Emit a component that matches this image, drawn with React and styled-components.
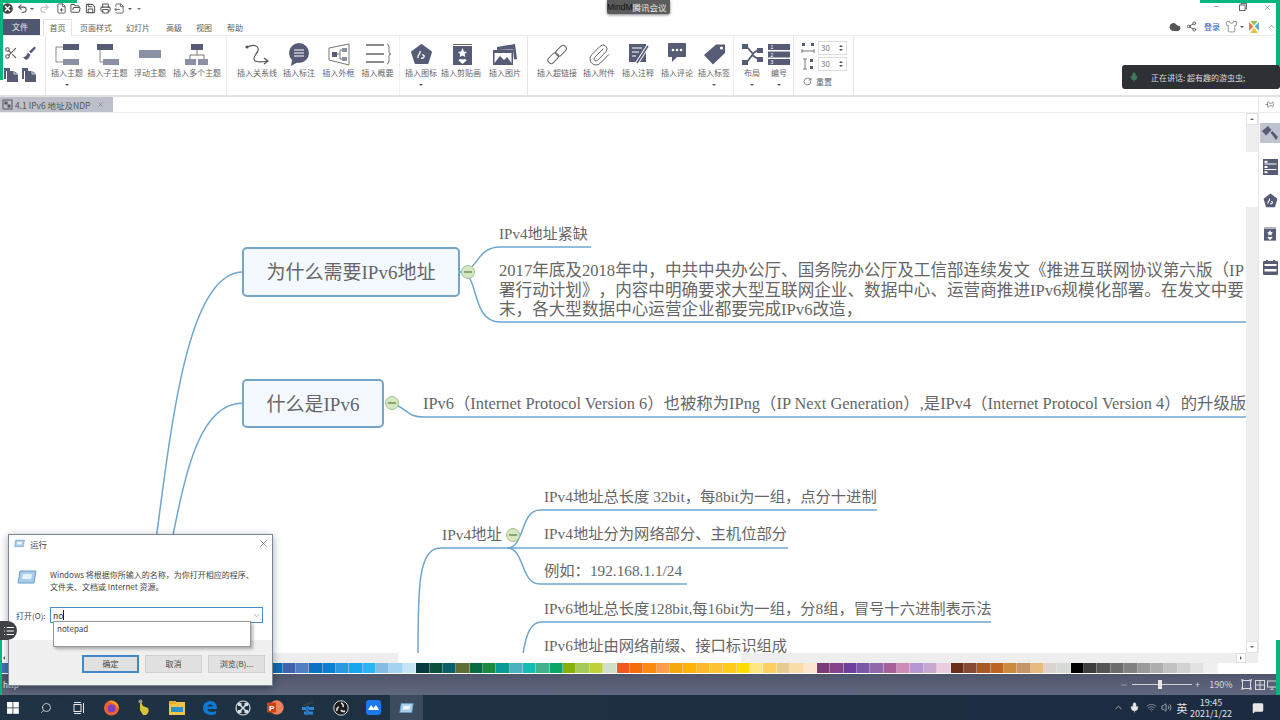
import React from "react";
import styled, { createGlobalStyle } from "styled-components";
import {
  Undo2, Redo2, FilePlus, FolderOpen, Save, Printer, FileOutput, Scissors,
  Paperclip, Mic, Search, ChevronDown, ChevronUp, X, Minus, Share2, Shirt, Cloud, RotateCw, Pin, Volume2, Wifi,
  MessageSquare, List,
} from "lucide-react";

const D = "#565c76";
const L = "#8b90a4";
const LINE = "#6fa6cf";

const GlobalStyle = createGlobalStyle`
  html, body { margin: 0; padding: 0; background: #fff; }
  * { box-sizing: border-box; }
  body { font-family: "Noto Sans CJK SC", "Liberation Sans", sans-serif; color: #5c5c5c; text-spacing-trim: space-all; }
`;

const Screen = styled.div`
  position: relative;
  width: 1280px;
  height: 720px;
  overflow: hidden;
  display: flex;
  flex-direction: column;
  background: #fff;
`;

const TitleBar = styled.div`
  height: 18px;
  display: flex;
  align-items: center;
  padding-bottom: 1px;
`;
const QatSlot = styled.div`
  flex: 0 0 ${p => p.$w}px;
  display: flex;
  justify-content: center;
  align-items: center;
  color: ${p => p.$color || "#555"};
`;
const Caret = styled.span`
  width: 0;
  height: 0;
  border-left: 2px solid transparent;
  border-right: 2px solid transparent;
  border-top: 2.5px solid ${p => p.$color || "#555"};
`;
const WindowControls = styled.div`
  margin-left: auto;
  margin-top: -3px;
  display: flex;
  color: #666;
  padding-right: 1px;
`;
const WinButton = styled.div`
  width: 24px;
  margin-left: ${p => p.$ml || 0}px;
  display: flex;
  justify-content: center;
`;

const MenuBar = styled.div`
  height: 17px;
  display: flex;
  align-items: flex-end;
  font-size: 8px;
  line-height: 15px;
`;
const FileTab = styled.div`
  width: 40px;
  height: 16px;
  background: #4e5672;
  color: #f0f0f0;
  text-align: center;
`;
const HomeTab = styled.div`
  width: 29px;
  height: 17px;
  margin-left: 3px;
  margin-bottom: -1px;
  background: #fff;
  border: 1px solid #e3e3e3;
  border-bottom: none;
  text-align: center;
  position: relative;
  z-index: 1;
`;
const MenuItem = styled.div`
  flex: 0 0 ${p => p.$w}px;
  text-align: center;
`;
const MenuRight = styled.div`
  margin-left: auto;
  height: 17px;
  display: flex;
  align-items: center;
  color: #555;
`;
const MenuRightSlot = styled.div`
  flex: 0 0 ${p => p.$w}px;
  display: flex;
  justify-content: center;
  align-items: center;
  color: ${p => p.$color || "#555"};
  font-size: 8px;
`;

const Ribbon = styled.div`
  height: 62px;
  display: flex;
  border-top: 1px solid #ececec;
  border-bottom: 2px solid #e2e2e2;
`;
const RibbonGroup = styled.div`
  flex: 0 0 ${p => p.$w}px;
  display: flex;
  padding-left: ${p => p.$pad || 0}px;
  position: relative;
  border-right: 1px solid ${p => (p.$strong ? "#e6e6e6" : "#f0f0f0")};
`;
const ClipGrid = styled.div`
  display: grid;
  grid-template-columns: 18px 18px;
  grid-auto-rows: 22px;
  padding: 6px 0 0 2px;
  align-items: center;
  justify-items: center;
  color: ${D};
`;
const RibbonButton = styled.div`
  flex: 0 0 ${p => p.$w}px;
  min-width: 0;
  display: flex;
  flex-direction: column;
  align-items: center;
  padding-top: 5px;
`;
const IconBox = styled.div`
  height: 27px;
  display: flex;
  align-items: center;
  justify-content: center;
`;
const RibbonLabel = styled.div`
  font-size: 8px;
  line-height: 10px;
  white-space: nowrap;
  color: #666;
`;
const ArrowRow = styled.div`
  margin-top: 6px;
  height: 4px;
  display: flex;
  justify-content: center;
`;
const SpacingCol = styled.div`
  display: flex;
  flex-direction: column;
  padding: 5px 0 0 7px;
  gap: 2px;
`;
const SpacingRow = styled.div`
  display: flex;
  align-items: center;
  height: 14px;
  gap: 3px;
`;
const NumBox = styled.div`
  width: 29px;
  height: 14px;
  border: 1px solid #ddd;
  font-size: 8px;
  line-height: 12px;
  padding-left: 2px;
  color: #777;
  display: flex;
  justify-content: space-between;
  align-items: center;
`;
const Spin = styled.div`
  display: flex;
  flex-direction: column;
  gap: 2px;
  padding-right: 3px;
`;
const CaretUp = styled(Caret)`
  transform: rotate(180deg);
`;
const CaretRight = styled(Caret)`
  transform: rotate(-90deg);
`;
const CaretLeft = styled(Caret)`
  transform: rotate(90deg);
`;
const ResetRow = styled.div`
  display: flex;
  align-items: center;
  gap: 4px;
  font-size: 8px;
  color: #666;
  margin-top: 3px;
  padding-left: 2px;
`;

const TabRow = styled.div`
  height: 16px;
  display: flex;
  border-bottom: 1px solid #ececec;
  align-items: stretch;
`;
const DocTab = styled.div`
  width: 113px;
  background: #bcc0ca;
  display: flex;
  align-items: center;
  font-size: 8.5px;
  padding-left: 2px;
  gap: 2px;
  color: #555;
  white-space: nowrap;
`;
const TabClose = styled.span`
  display: flex;
  margin-left: 4px;
`;
const PinSlot = styled.div`
  margin-left: auto;
  width: 22px;
  border-left: 1px solid #e8e8e8;
  display: flex;
  align-items: center;
  justify-content: center;
  color: #555;
  & svg {
    transform: rotate(90deg);
  }
`;

const Workspace = styled.div`
  flex: 1;
  min-height: 0;
  display: flex;
`;
const Canvas = styled.div`
  position: relative;
  flex: 1;
  overflow: hidden;
  background: #fff;
  font-family: "Liberation Serif", "Noto Sans CJK SC", serif;
  color: #666;
`;
const Lines = styled.svg`
  position: absolute;
  left: 0;
  top: 0;
`;
const TopicBox = styled.div`
  position: absolute;
  left: ${p => p.$x}px;
  top: ${p => p.$y - 113}px;
  width: ${p => p.$w}px;
  height: ${p => p.$h}px;
  padding-bottom: 3px;
  border: 2px solid #74a6cc;
  border-radius: 5px;
  background: #f3f9fe;
  display: flex;
  justify-content: center;
  align-items: center;
  font-size: 19px;
  white-space: nowrap;
`;
const Leaf = styled.div`
  position: absolute;
  left: ${p => p.$x}px;
  top: ${p => p.$y - 113}px;
  font-size: ${p => p.$size || 15.3}px;
  line-height: ${p => p.$lh || 20}px;
  white-space: pre;
`;
const Toggle = styled.div`
  position: absolute;
  left: ${p => p.$x - 7}px;
  top: ${p => p.$y - 113 - 7}px;
  width: 14px;
  height: 14px;
  border-radius: 50%;
  background: #d6e6c2;
  border: 1px solid #a3c48a;
  display: flex;
  align-items: center;
  justify-content: center;
  &::after {
    content: "";
    width: 8px;
    height: 1.5px;
    background: #87a873;
  }
`;

const VScroll = styled.div`
  flex: 0 0 12px;
  background: #eee;
  display: flex;
  flex-direction: column;
`;
const ScrollButton = styled.div`
  height: 12px;
  background: #fff;
  border: 1px solid #e2e2e2;
  display: flex;
  align-items: center;
  justify-content: center;
  margin-top: ${p => (p.$end ? "auto" : 0)};
`;
const VThumb = styled.div`
  height: 55px;
  margin-top: 27px;
  background: #fff;
`;
const SidePanel = styled.div`
  flex: 0 0 22px;
  border-left: 1px solid #e6e6e6;
  padding-top: 10px;
  display: flex;
  flex-direction: column;
  gap: 13.5px;
`;
const SideSlot = styled.div`
  height: 20px;
  display: flex;
  align-items: center;
  justify-content: center;
  margin-left: 1px;
  background: ${p => (p.$active ? "#bfc3cf" : "transparent")};
`;

const HScroll = styled.div`
  height: 10px;
  margin-right: 22px;
  background: #eee;
  display: flex;
`;
const HLeft = styled.div`
  width: 8px;
  background: #fff;
  display: flex;
  align-items: center;
  justify-content: center;
`;
const HThumb = styled.div`
  width: 343px;
  margin-left: 390px;
  background: #fff;
`;
const HRight = styled.div`
  width: 10px;
  margin-left: auto;
  margin-right: 12px;
  background: #fff;
  border: 1px solid #ddd;
  display: flex;
  align-items: center;
  justify-content: center;
`;
const PaletteRow = styled.div`
  height: 11px;
  display: flex;
  padding-left: 2px;
  border-bottom: 1px solid #fff;
`;
const Swatch = styled.div`
  flex: 0 0 13.36px;
  background: ${p => p.$c};
  border-right: 1px solid rgba(255, 255, 255, 0.35);
`;

const StatusBar = styled.div`
  height: 21px;
  background: linear-gradient(#4f566c, #60677f);
  display: flex;
  align-items: center;
  justify-content: flex-end;
  padding-right: 1px;
  color: #d6d8de;
  font-size: 9px;
`;
const StatusLeft = styled.div`
  margin-right: auto;
  padding-left: 3px;
  font-size: 8px;
  color: #eee;
`;
const StatusSlot = styled.div`
  flex: 0 0 ${p => p.$w}px;
  display: flex;
  align-items: center;
  justify-content: center;
`;
const ZoomTrack = styled.div`
  position: relative;
  width: 60px;
  height: 1px;
  background: #cfd2da;
`;
const ZoomThumb = styled.div`
  position: absolute;
  left: 26px;
  top: -4px;
  width: 4px;
  height: 9px;
  background: #e8e8e8;
`;

const Taskbar = styled.div`
  height: 25px;
  display: flex;
  align-items: stretch;
  background: linear-gradient(90deg, #1f3344, #1e3143 30%, #1c2b40);
  color: #e8e8e8;
`;
const TaskApps = styled.div`
  display: flex;
  margin-left: -3.4px;
`;
const TaskSlot = styled.div`
  flex: 0 0 32.8px;
  display: flex;
  align-items: center;
  justify-content: center;
  background: ${p => (p.$active ? "#3c4b5e" : "transparent")};
  & .mirror {
    transform: scaleX(-1);
  }
`;
const Tray = styled.div`
  margin-left: auto;
  display: flex;
  align-items: center;
  padding-right: 10px;
`;
const TraySlot = styled.div`
  flex: 0 0 ${p => p.$w}px;
  margin-left: ${p => p.$ml || 0}px;
  display: flex;
  align-items: center;
  justify-content: center;
  font-size: 11px;
`;
const Clock = styled.div`
  font-size: 9px;
  line-height: 11px;
  text-align: center;
  color: #dfe2e8;
  white-space: nowrap;
`;

const Dialog = styled.div`
  position: absolute;
  left: 8px;
  top: 534px;
  width: 265px;
  height: 152px;
  background: #fff;
  border: 1px solid #7b8596;
  box-shadow: 0 2px 8px rgba(0, 0, 0, 0.35);
  display: flex;
  flex-direction: column;
  font-size: 8px;
  color: #444;
`;
const DialogTitle = styled.div`
  height: 17px;
  display: flex;
  align-items: center;
  padding: 0 3px 0 5px;
  gap: 5px;
  font-size: 8.5px;
`;
const DialogClose = styled.div`
  margin-left: auto;
  color: #444;
  display: flex;
`;
const DialogBody = styled.div`
  display: flex;
  padding: 17px 0 0 8px;
  gap: 13px;
  line-height: 12px;
`;
const DialogText = styled.div`
  white-space: pre;
`;
const InputRow = styled.div`
  display: flex;
  align-items: center;
  margin-top: 14px;
  padding-left: 7px;
`;
const InputLabel = styled.div`
  width: 34px;
`;
const RunInput = styled.div`
  width: 213px;
  height: 16px;
  border: 1px solid #4a8cc8;
  display: flex;
  align-items: center;
  padding-left: 2px;
  font-size: 8.5px;
  color: #333;
`;
const Cursor = styled.span`
  width: 1px;
  height: 10px;
  background: #222;
`;
const InputChevron = styled.div`
  margin-left: auto;
  padding-right: 1px;
  display: flex;
  color: #777;
`;
const Suggestions = styled.div`
  position: absolute;
  left: 44px;
  top: 86px;
  width: 198px;
  height: 26px;
  background: #fff;
  border: 1px solid #999;
  box-shadow: 2px 2px 3px rgba(0, 0, 0, 0.3);
  padding: 1px 0 0 3px;
  font-size: 8px;
  line-height: 12px;
  z-index: 2;
`;
const DialogFooter = styled.div`
  margin-top: auto;
  height: 45px;
  background: #f0f0f0;
  display: flex;
  justify-content: flex-end;
  gap: 6px;
  padding: 15px 7px 0 0;
`;
const DlgButton = styled.div`
  width: 57px;
  height: 18px;
  background: #e1e1e1;
  border: 1px solid ${p => (p.$primary ? "#3f8ac6" : "#d0d0d0")};
  box-shadow: ${p => (p.$primary ? "inset 0 0 0 1px #3f8ac6" : "none")};
  text-align: center;
  line-height: 16px;
`;

const GreenBar = styled.div`
  position: absolute;
  left: ${p => p.$x}px;
  top: ${p => p.$y}px;
  width: ${p => p.$w}px;
  height: ${p => p.$h}px;
  background: #07b67e;
  z-index: 5;
`;
const MeetingBadge = styled.div`
  position: absolute;
  left: 607px;
  top: 0;
  width: 63px;
  height: 14px;
  background: #5b5b5b;
  box-shadow: 0 1px 3px rgba(0, 0, 0, 0.5);
  border-radius: 0 0 2px 2px;
  font-size: 8.5px;
  line-height: 14px;
  color: #eee;
  white-space: nowrap;
  display: flex;
`;
const BadgeApp = styled.span`
  color: #111;
  font-family: "Liberation Sans", sans-serif;
`;
const SpeakToast = styled.div`
  position: absolute;
  left: 1122px;
  top: 65px;
  width: 158px;
  height: 24px;
  background: #2d3034;
  border-radius: 3px;
  color: #dcdcdc;
  font-size: 8px;
  display: flex;
  align-items: center;
  padding-left: 7px;
  gap: 12px;
  z-index: 6;
`;
const MeetingMenu = styled.div`
  position: absolute;
  left: 0;
  top: 621px;
  width: 17px;
  height: 19px;
  background: #3f4145;
  border-radius: 0 10px 10px 0;
  color: #fff;
  display: flex;
  align-items: center;
  justify-content: center;
  z-index: 6;
`;

const Ico = ({ children }) => (
  <svg width="34" height="27" viewBox="0 0 34 27">{children}</svg>
);

const icons = {
  topic: <Ico><rect x="13" y="3" width="16" height="6" fill={D}/><rect x="13" y="18" width="16" height="6" fill={L}/><path d="M13 6H6V21H13" fill="none" stroke="#8a8a8a"/></Ico>,
  sub: <Ico><rect x="6" y="3" width="16" height="6" fill={D}/><rect x="12" y="18" width="16" height="6" fill={L}/><path d="M9 9V21H12" fill="none" stroke="#8a8a8a"/></Ico>,
  float: <Ico><rect x="6" y="9" width="22" height="8" fill={L}/></Ico>,
  multi: <Ico><rect x="11" y="3" width="12" height="6" fill={D}/><path d="M17 9V14M10 18V14H24V18" fill="none" stroke="#777"/><rect x="5" y="18" width="11" height="6" fill={L}/><rect x="18" y="18" width="10" height="6" fill={L}/></Ico>,
  relation: <Ico><circle cx="7" cy="6" r="1.6" fill="#555"/><path d="M7 6C15 2 22 6 16 13C10 21 18 22 27 20M24 17L28 20L24 23" fill="none" stroke="#555" strokeWidth="1.2"/></Ico>,
  callout: <Ico><circle cx="17" cy="12" r="10" fill={D}/><path d="M10 19L9 25L16 21Z" fill={D}/><path d="M12 9H22M12 12H22M12 15H22" stroke="#fff"/></Ico>,
  frame: <Ico><path d="M7 7L27 3V24L7 19Z" fill="none" stroke="#777"/><rect x="10" y="11" width="5" height="5" fill={D}/><rect x="20" y="7" width="5" height="4" fill={L}/><rect x="20" y="16" width="5" height="4" fill={L}/><path d="M15 13H18M18 9V18M18 9H20M18 18H20" fill="none" stroke="#777"/></Ico>,
  summary: <Ico><path d="M5 4H23M5 13H23M5 21H23" stroke="#666" strokeWidth="1.4"/><path d="M26 3Q28 3 28 6V11Q28 13 30 13Q28 13 28 15V20Q28 23 26 23" fill="none" stroke="#777"/></Ico>,
  icon: <Ico><path d="M17.5 4L27 11L23.5 22H11.5L8 11Z" fill={D} stroke={D} strokeWidth="2" strokeLinejoin="round"/><path d="M14 17C13 13 17 14 16 10M17 17C21 18 21 13 18 14" fill="none" stroke="#fff" strokeWidth="1.4"/></Ico>,
  clip: <Ico><path d="M9 3.5H28" stroke="#666"/><rect x="9" y="5" width="19" height="19" fill={D}/><path d="M18.5 7L20 10.5L23 11L20.8 13L21.3 16L18.5 14.5L15.7 16L16.2 13L14 11L17 10.5Z" fill="#fff"/><path d="M18.5 23L14.5 19.5Q15 17 18.5 18.5Q22 17 22.5 19.5Z" fill="#fff"/></Ico>,
  image: <Ico><path d="M9 6L27 3L29 18L26 18.5L25 8.5L9 9Z" fill={D}/><rect x="5" y="9" width="20" height="15" fill={D}/><rect x="6.5" y="11" width="17" height="11" fill="#fff"/><path d="M6.5 22L12 15L16 19L19 16L23.5 22Z" fill={D}/><rect x="5" y="9" width="20" height="3" fill={D}/></Ico>,
  link: <Ico><rect x="7" y="14" width="12" height="6.5" rx="3" transform="rotate(-45 13 17)" fill="none" stroke="#666"/><rect x="15" y="6.5" width="12" height="6.5" rx="3" transform="rotate(-45 21 9.7)" fill="none" stroke="#666"/></Ico>,
  note: <Ico><rect x="8" y="3" width="17" height="18" fill={D}/><path d="M11 7H21M11 11H18M11 15H15" stroke="#fff" strokeWidth="1.2"/><path d="M16 22L27 5" stroke="#fff" strokeWidth="3.6"/><path d="M16 22L27 5" stroke={D} strokeWidth="1.6"/></Ico>,
  comment: <Ico><rect x="8" y="2" width="18" height="14" rx="1" fill={D}/><path d="M12 16V21L17 16Z" fill={D}/><circle cx="13" cy="9" r="1.3" fill="#fff"/><circle cx="17" cy="9" r="1.3" fill="#fff"/><circle cx="21" cy="9" r="1.3" fill="#fff"/></Ico>,
  tag: <Ico><path d="M7 14L19 3.5H28V12L16 23.5Z" fill={D} strokeLinejoin="round"/><circle cx="24.5" cy="7" r="1.6" fill="#fff"/></Ico>,
  layout: <Ico><rect x="7" y="3" width="6" height="5" fill={D}/><rect x="7" y="19" width="6" height="5" fill={D}/><rect x="22" y="7" width="6" height="5" fill={D}/><rect x="22" y="16" width="6" height="5" fill={D}/><path d="M12 6L18 13L12 21M17 13L23 9M17 14L23 18" fill="none" stroke={D} strokeWidth="1.8"/></Ico>,
  number: <Ico><rect x="6" y="3" width="22" height="6" fill={D}/><rect x="6" y="10.5" width="22" height="6" fill={D}/><rect x="6" y="18" width="22" height="6" fill={D}/><text x="8.5" y="8" fontSize="5" fill="#fff" fontFamily="Liberation Sans">1</text><text x="8.5" y="15.5" fontSize="5" fill="#fff" fontFamily="Liberation Sans">2</text><text x="8.5" y="23" fontSize="5" fill="#fff" fontFamily="Liberation Sans">3</text></Ico>,
  attach: <Paperclip size={24} strokeWidth={1} color="#666" />,
};

const ribbonGroups = [
  { w: 181, pad: 1, strong: false, items: [["topic", "插入主题", 40, true], ["sub", "插入子主题", 41], ["float", "浮动主题", 44], ["multi", "插入多个主题", 50]] },
  { w: 173, pad: 8, items: [["relation", "插入关系线", 44], ["callout", "插入标注", 40], ["frame", "插入外框", 39], ["summary", "插入概要", 39]] },
  { w: 127, pad: 3, strong: true, items: [["icon", "插入图标", 36, true], ["clip", "插入剪贴画", 44], ["image", "插入图片", 44]] },
  { w: 206, pad: 8, items: [["link", "插入超链接", 42], ["attach", "插入附件", 42], ["note", "插入注释", 36], ["comment", "插入评论", 42], ["tag", "插入标签", 32, true]] },
  { w: 60, pad: 5, strong: true, items: [["layout", "布局", 26, true], ["number", "编号", 28, true]] },
];

const leaves = [
  { x: 499, y: 224, size: 15.1, text: "IPv4地址紧缺" },
  { x: 499, y: 261, size: 16.6, lh: 19.5, text: "2017年底及2018年中，中共中央办公厅、国务院办公厅及工信部连续发文《推进互联网协议第六版（IP\n署行动计划》，内容中明确要求大型互联网企业、数据中心、运营商推进IPv6规模化部署。在发文中要\n末，各大型数据中心运营企业都要完成IPv6改造，" },
  { x: 423, y: 394, size: 16.4, text: "IPv6（Internet Protocol Version 6）也被称为IPng（IP Next Generation）,是IPv4（Internet Protocol Version 4）的升级版" },
  { x: 442, y: 525, size: 15.4, text: "IPv4地址" },
  { x: 544, y: 487, text: "IPv4地址总长度 32bit，每8bit为一组，点分十进制" },
  { x: 544, y: 524, text: "IPv4地址分为网络部分、主机位部分" },
  { x: 544, y: 561, text: "例如：192.168.1.1/24" },
  { x: 544, y: 599, text: "IPv6地址总长度128bit,每16bit为一组，分8组，冒号十六进制表示法" },
  { x: 544, y: 636, text: "IPv6地址由网络前缀、接口标识组成" },
];

const curves = [
  "M156 540C172 420 188 272 243 272",
  "M172 540C186 470 200 403 243 403",
  "M460 272C478 272 476 247 500 247H591",
  "M460 272C480 272 470 322 500 322H1246",
  "M396 405C408 410 408 417 424 417H1246",
  "M418 654C418 590 418 548 440 548H507",
  "M507 548C525 548 520 510 540 510H877",
  "M507 548H788",
  "M507 548C525 548 520 584 540 584H687",
  "M523 654C526 635 530 622 542 622H991",
];

const blues = Array(20).fill("#3a76bb");
const palette = [
  ...blues,
  "#0b6cb0", "#3f62ad", "#4f7fc5", "#0a72c3", "#0a7fd0", "#2a9ae0", "#16a5ee", "#2bb4f2", "#85bde2", "#a2d3ef", "#c7e4f4",
  "#063a3f", "#0e4f3f", "#0a5f6a", "#5d6f35", "#066d42", "#1b8a3e", "#0a9a96", "#4cb0bf", "#12bdb1", "#43b28c", "#0aa564",
  "#86b10a", "#a6c95a", "#c0cf3a", "#cfe0c8", "#ee5a24", "#f56a0a", "#f98a12", "#fb9c50", "#f5a80e", "#ffb00a", "#ffb72d",
  "#ffc235", "#ffcc1a", "#ffdb00", "#ffe680", "#ffd060", "#e8cb90", "#fadca8", "#fde6cf", "#7c3a78", "#86438b", "#6e3f9c",
  "#7a58a8", "#9268a8", "#a65f98", "#d08ab8", "#b695d5", "#c8a8cf", "#eccde0", "#6a2f1a", "#854a30", "#a85a24", "#bc6420",
  "#cc8a3c", "#c49566", "#e8ba80", "#dcd3cf", "#d5dad5", "#000000", "#3c3c3c", "#555555", "#6c6c6c", "#828282", "#9a9a9a",
  "#adadad", "#c2c2c2", "#d2d2d2", "#e2e2e2", "#f0f0f0",
];

const RunIcon = ({ size = 18 }) => (
  <svg width={size} height={size * 0.8} viewBox="0 0 20 16">
    <path d="M3 2H19L17 14H1Z" fill="#a8cdea" stroke="#6c9cc4"/>
    <path d="M6 5H15L14 10H5Z" fill="#e8f3fb"/>
  </svg>
);

const BrushLeft = () => (
  <svg width="13" height="14" viewBox="0 0 13 14" fill={D}>
    <path d="M11.5 0.5L13 2L8 7.5L6 5.5Z"/>
    <path d="M5 6.5L7.5 9L5.5 12.5L3 14L0 11.5L3 10Z"/>
  </svg>
);
const BrushRight = () => (
  <svg width="16" height="15" viewBox="0 0 16 15" fill={D}>
    <path d="M0 5L6 0L9.5 4L4 9.5Z"/>
    <path d="M8.5 6.5L10.5 5L16 11L14 14Z"/>
  </svg>
);
const PagesIcon = () => (
  <svg width="14" height="14" viewBox="0 0 14 14" fill={D}>
    <path d="M0 0H6V3H2V11H0Z"/>
    <path d="M3 3H10L14 6V14H3Z"/>
    <path d="M10 3V6H14" fill="none" stroke="#fff" strokeWidth="0.8"/>
  </svg>
);

const WinLogo = () => (
  <svg width="12" height="12" viewBox="0 0 12 12" fill="#fff">
    <rect width="5.5" height="5.5"/><rect x="6.3" width="5.5" height="5.5"/><rect y="6.3" width="5.5" height="5.5"/><rect x="6.3" y="6.3" width="5.5" height="5.5"/>
  </svg>
);
const TaskView = () => (
  <svg width="12" height="12" viewBox="0 0 12 12" fill="none" stroke="#e8e8e8">
    <rect x="1" y="2.5" width="7" height="7"/><path d="M1 .5H8M1 11.5H8M10.5 1V11"/>
  </svg>
);
const Firefox = () => (
  <svg width="17" height="17" viewBox="0 0 17 17">
    <circle cx="8.5" cy="9" r="7.5" fill="#f2622e"/><circle cx="8.5" cy="9.5" r="4" fill="#7b3fc4"/><path d="M6 2C11 1 16 5 15.5 10C14 6 10 4 6 2Z" fill="#ffb21e"/>
  </svg>
);
const HandApp = () => (
  <svg width="14" height="18" viewBox="0 0 14 18">
    <path d="M3 1L6 7L11 9Q13 13 9 16H6L3 11Z" fill="#d8c23a"/><circle cx="3.5" cy="2.5" r="2" fill="#9a9a8a"/>
  </svg>
);
const FolderApp = () => (
  <svg width="16" height="14" viewBox="0 0 16 14">
    <rect y="1" width="16" height="13" fill="#f0c44c"/><rect x="0" y="0" width="7" height="3" fill="#e4ae32"/><rect x="2" y="6" width="12" height="5" fill="#2a8fd0"/>
  </svg>
);
const EdgeApp = () => (
  <svg width="16" height="16" viewBox="0 0 16 16">
    <path d="M1 8C1 3 5 1 8.5 1C13 1 15 4.5 15 9H5.5C6 12 10 13 14 11V14C9 16 1 15 1 8ZM5.5 6.5H11C11 4 6.5 3.5 5.5 6.5Z" fill="#0f78d4"/>
  </svg>
);
const XmindApp = () => (
  <svg width="16" height="16" viewBox="0 0 16 16" fill="none" stroke="#d8dde2">
    <circle cx="8" cy="8" r="7" strokeWidth="1.2"/><path d="M5 5L11 11M11 5L5 11" strokeWidth="1.5"/><rect x="3.5" y="3.5" width="2.5" height="2" fill="#d8dde2"/><rect x="10" y="10.5" width="2.5" height="2" fill="#d8dde2"/><rect x="10" y="3.5" width="2.5" height="2" fill="#d8dde2"/><rect x="3.5" y="10.5" width="2.5" height="2" fill="#d8dde2"/>
  </svg>
);
const PptApp = () => (
  <svg width="17" height="15" viewBox="0 0 17 15">
    <circle cx="9.5" cy="7.5" r="7.2" fill="#f0825a"/><rect x="0" y="2.5" width="9" height="10" rx="1" fill="#c6421c"/><text x="2" y="10.5" fontSize="8" fontFamily="Liberation Sans" fontWeight="700" fill="#fff">P</text>
  </svg>
);
const ToolApp = () => (
  <svg width="14" height="16" viewBox="0 0 14 16">
    <path d="M1 5L12 1V3L3 6Z" fill="#3a3f45"/><rect x="1" y="7" width="12" height="3" fill="#2a86d8"/><rect x="3" y="11.5" width="9" height="3" fill="#2a86d8"/><rect x="5" y="6" width="3" height="9" fill="#2a70b8"/>
  </svg>
);
const ObsApp = () => (
  <svg width="16" height="16" viewBox="0 0 16 16">
    <circle cx="8" cy="8" r="7.2" fill="#1c1c1c" stroke="#d8d8d8"/><path d="M8 3A3 3 0 0 1 10 7M12 11A3 3 0 0 1 8 10M4 11A3 3 0 0 1 6 7" fill="none" stroke="#ddd" strokeWidth="1.6"/>
  </svg>
);
const MmApp = () => (
  <svg width="15" height="15" viewBox="0 0 15 15">
    <rect width="15" height="15" rx="3" fill="#1a78f0"/><path d="M2 10L5 5L7.5 8L10 5L13 10Z" fill="#fff"/>
  </svg>
);

const Btn = ({ icon, label, w, arrow }) => (
  <RibbonButton $w={w}>
    <IconBox>{icons[icon]}</IconBox>
    <RibbonLabel>{label}</RibbonLabel>
    {arrow && <ArrowRow><Caret /></ArrowRow>}
  </RibbonButton>
);

export default function App() {
  return (
    <Screen>
      <GlobalStyle />
      <TitleBar>
        <QatSlot $w={14}>
          <svg width="11" height="11" viewBox="0 0 11 11"><circle cx="5.5" cy="5.5" r="5.3" fill="#444"/><path d="M3 3L8 8M8 3L3 8" stroke="#fff" strokeWidth="1.5"/></svg>
        </QatSlot>
        <QatSlot $w={16}><Undo2 size={11} strokeWidth={2.2} /></QatSlot>
        <QatSlot $w={4}><Caret /></QatSlot>
        <QatSlot $w={20} $color="#aaa"><Redo2 size={11} strokeWidth={2} /></QatSlot>
        <QatSlot $w={14}><FilePlus size={11} strokeWidth={2} /></QatSlot>
        <QatSlot $w={15}><FolderOpen size={11} strokeWidth={2.2} /></QatSlot>
        <QatSlot $w={15}><Save size={11} strokeWidth={2.2} /></QatSlot>
        <QatSlot $w={15}><Printer size={11} strokeWidth={2.2} /></QatSlot>
        <QatSlot $w={13}><FileOutput size={11} strokeWidth={1.8} /></QatSlot>
        <QatSlot $w={8}><Caret /></QatSlot>
        <QatSlot $w={9}><Caret $color="#777" /></QatSlot>
        <WindowControls>
          <WinButton><Minus size={7} strokeWidth={2} /></WinButton>
          <WinButton $ml={3}>
            <svg width="8" height="8" viewBox="0 0 8 8" fill="none" stroke="#666"><rect x=".5" y="2" width="5.5" height="5.5"/><path d="M2 2V.5H7.5V6H6"/></svg>
          </WinButton>
          <WinButton><X size={9} strokeWidth={1.2} /></WinButton>
        </WindowControls>
      </TitleBar>

      <MenuBar>
        <FileTab>文件</FileTab>
        <HomeTab>首页</HomeTab>
        <MenuItem $w={48}>页面样式</MenuItem>
        <MenuItem $w={36}>幻灯片</MenuItem>
        <MenuItem $w={36}>高级</MenuItem>
        <MenuItem $w={24}>视图</MenuItem>
        <MenuItem $w={38}>帮助</MenuItem>
        <MenuRight>
          <MenuRightSlot $w={14}><Cloud size={12} fill="#555" /></MenuRightSlot>
          <MenuRightSlot $w={18}><Share2 size={11} strokeWidth={2} /></MenuRightSlot>
          <MenuRightSlot $w={24} $color="#2452b8">登录</MenuRightSlot>
          <MenuRightSlot $w={14}><Shirt size={13} strokeWidth={1.1} /></MenuRightSlot>
          <MenuRightSlot $w={8}><Caret /></MenuRightSlot>
          <MenuRightSlot $w={16}>
            <svg width="12" height="12" viewBox="0 0 11 11"><path d="M1 1L5 5L1 9Z" fill="#e6783c"/><path d="M10 1L6 5L10 9Z" fill="#5ab0d8"/><path d="M2 0H9L5.5 4Z" fill="#8ec24a"/><path d="M2 11H9L5.5 6Z" fill="#e8c23a"/></svg>
          </MenuRightSlot>
          <MenuRightSlot $w={18}><ChevronUp size={9} strokeWidth={1.6} /></MenuRightSlot>
        </MenuRight>
      </MenuBar>

      <Ribbon>
        <RibbonGroup $w={46} $strong>
          <ClipGrid>
            <Scissors size={14} strokeWidth={1.8} color="#555" />
            <BrushLeft />
            <PagesIcon />
            <PagesIcon />
          </ClipGrid>
        </RibbonGroup>
        {ribbonGroups.map(g => (
          <RibbonGroup key={g.w} $w={g.w} $pad={g.pad} $strong={g.strong}>
            {g.items.map(([icon, label, w, arrow]) => (
              <Btn key={label} icon={icon} label={label} w={w} arrow={arrow} />
            ))}
          </RibbonGroup>
        ))}
        <RibbonGroup $w={60} $strong>
          <SpacingCol>
            <SpacingRow>
              <svg width="14" height="12" viewBox="0 0 14 12" fill={D}><rect x="1" y="1" width="3" height="3"/><rect x="10" y="1" width="3" height="3"/><path d="M1 7V11M13 7V11M1 9H13" fill="none" stroke="#777"/></svg>
              <NumBox>30<Spin><CaretUp /><Caret /></Spin></NumBox>
            </SpacingRow>
            <SpacingRow>
              <svg width="14" height="12" viewBox="0 0 14 12" fill={D}><rect x="9" y="1" width="3" height="3"/><rect x="9" y="8" width="3" height="3"/><path d="M2 1H6M2 11H6M4 1V11" fill="none" stroke="#777"/></svg>
              <NumBox>30<Spin><CaretUp /><Caret /></Spin></NumBox>
            </SpacingRow>
            <ResetRow><RotateCw size={9} strokeWidth={2} />重置</ResetRow>
          </SpacingCol>
        </RibbonGroup>
      </Ribbon>

      <TabRow>
        <DocTab>
          <svg width="11" height="11" viewBox="0 0 11 11" fill="none" stroke="#555"><rect x="1" y="1" width="9" height="9"/><rect x="3" y="3" width="2" height="2" fill="#555"/><rect x="6" y="6" width="2" height="2" fill="#555"/></svg>
          4.1 IPv6 地址及NDP
          <TabClose><X size={7} strokeWidth={1.4} /></TabClose>
        </DocTab>
        <PinSlot><Pin size={9} strokeWidth={1.6} /></PinSlot>
      </TabRow>

      <Workspace>
        <Canvas>
          <Lines width="1246" height="540" viewBox="0 113 1246 540" fill="none" stroke={LINE} strokeWidth="1.5">
            {curves.map(d => <path key={d} d={d} />)}
          </Lines>
          <TopicBox $x={242} $y={247} $w={218} $h={50}>为什么需要IPv6地址</TopicBox>
          <TopicBox $x={242} $y={379} $w={142} $h={49}>什么是IPv6</TopicBox>
          <Toggle $x={468} $y={272} />
          <Toggle $x={392} $y={403} />
          <Toggle $x={513} $y={535} />
          {leaves.map(l => (
            <Leaf key={l.text} $x={l.x} $y={l.y} $size={l.size} $lh={l.lh}>{l.text}</Leaf>
          ))}
        </Canvas>
        <VScroll>
          <ScrollButton><CaretUp $color="#666" /></ScrollButton>
          <VThumb />
          <ScrollButton $end><Caret $color="#666" /></ScrollButton>
        </VScroll>
        <SidePanel>
          <SideSlot $active><BrushRight /></SideSlot>
          <SideSlot>
            <svg width="15" height="16" viewBox="0 0 15 16"><rect width="15" height="16" fill={D}/><path d="M1.5 5H13.5M1.5 10.5H13.5" stroke="#fff"/><rect x="1.5" y="1.8" width="3" height="2" fill="#fff"/><rect x="1.5" y="7" width="3" height="2" fill="#fff"/><rect x="1.5" y="12.2" width="3" height="2" fill="#fff"/></svg>
          </SideSlot>
          <SideSlot>
            <svg width="15" height="15" viewBox="0 0 21 21"><path d="M10.5 2L19 8.5L16 19H5L2 8.5Z" fill={D} stroke={D} strokeWidth="2" strokeLinejoin="round"/><path d="M7 15C6 11 10 12 9 8M10 15C14 16 14 11 11 12" fill="none" stroke="#fff" strokeWidth="1.5"/></svg>
          </SideSlot>
          <SideSlot>
            <svg width="12" height="16" viewBox="0 0 19 21"><path d="M0 .5H19" stroke="#666"/><rect y="2" width="19" height="19" fill={D}/><path d="M9.5 4L11 7.5L14 8L11.8 10L12.3 13L9.5 11.5L6.7 13L7.2 10L5 8L8 7.5Z" fill="#fff"/><path d="M9.5 20L5.5 16.5Q6 14 9.5 15.5Q13 14 13.5 16.5Z" fill="#fff"/></svg>
          </SideSlot>
          <SideSlot>
            <svg width="15" height="15" viewBox="0 0 15 15"><rect y="1" width="15" height="14" rx="1" fill={D}/><rect x="3" y="0" width="2" height="3" fill={D}/><rect x="10" y="0" width="2" height="3" fill={D}/><rect x="1.5" y="4" width="12" height="2" fill="#fff"/><rect x="1.5" y="9" width="12" height="2.5" fill="#fff"/></svg>
          </SideSlot>
        </SidePanel>
      </Workspace>

      <HScroll>
        <HLeft><CaretLeft $color="#666" /></HLeft>
        <HThumb />
        <HRight><CaretRight $color="#666" /></HRight>
      </HScroll>
      <PaletteRow>
        {palette.map((c, i) => <Swatch key={i} $c={c} />)}
      </PaletteRow>

      <StatusBar>
        <StatusLeft>http</StatusLeft>
        <StatusSlot $w={16}><Minus size={8} strokeWidth={1.5} /></StatusSlot>
        <ZoomTrack><ZoomThumb /></ZoomTrack>
        <StatusSlot $w={11}>+</StatusSlot>
        <StatusSlot $w={36}>190%</StatusSlot>
        <StatusSlot $w={15}>
          <svg width="11" height="11" viewBox="0 0 11 11" fill="none" stroke="#d6d8de"><rect x="1.5" y="1.5" width="8" height="8"/><path d="M0 3V0H3M8 0H11V3M11 8V11H8M3 11H0V8"/></svg>
        </StatusSlot>
        <StatusSlot $w={11}>
          <svg width="10" height="10" viewBox="0 0 10 10" fill="none" stroke="#d6d8de"><rect x=".5" y=".5" width="9" height="9"/><path d="M5 0V10M0 5H10"/></svg>
        </StatusSlot>
        <StatusSlot $w={14}>
          <svg width="10" height="10" viewBox="0 0 10 10" fill="none" stroke="#d6d8de"><rect x=".5" y="1" width="9" height="6"/><path d="M5 7V10M3 10H7"/></svg>
        </StatusSlot>
      </StatusBar>

      <Taskbar>
        <TaskApps>
          <TaskSlot><WinLogo /></TaskSlot>
          <TaskSlot><Search className="mirror" size={12} strokeWidth={1.6} /></TaskSlot>
          <TaskSlot><TaskView /></TaskSlot>
          <TaskSlot><Firefox /></TaskSlot>
          <TaskSlot><HandApp /></TaskSlot>
          <TaskSlot><FolderApp /></TaskSlot>
          <TaskSlot><EdgeApp /></TaskSlot>
          <TaskSlot><XmindApp /></TaskSlot>
          <TaskSlot><PptApp /></TaskSlot>
          <TaskSlot><ToolApp /></TaskSlot>
          <TaskSlot><ObsApp /></TaskSlot>
          <TaskSlot><MmApp /></TaskSlot>
          <TaskSlot $active><RunIcon size={15} /></TaskSlot>
        </TaskApps>
        <Tray>
          <TraySlot $w={14}><ChevronUp size={11} strokeWidth={1.4} /></TraySlot>
          <TraySlot $w={17}><Mic size={11} fill="#e8e8e8" strokeWidth={1.4} /></TraySlot>
          <TraySlot $w={17}><Wifi size={11} strokeWidth={1.4} color="#aab0b8" /></TraySlot>
          <TraySlot $w={14}><Volume2 size={11} strokeWidth={1.4} /></TraySlot>
          <TraySlot $w={16}>英</TraySlot>
          <TraySlot $w={36}><Clock>19:45<br />2021/1/22</Clock></TraySlot>
          <TraySlot $w={24} $ml={14}><MessageSquare size={12} fill="#e8e8e8" strokeWidth={1} /></TraySlot>
        </Tray>
      </Taskbar>

      <Dialog>
        <DialogTitle>
          <RunIcon size={11} />
          <span>运行</span>
          <DialogClose><X size={11} strokeWidth={1.2} /></DialogClose>
        </DialogTitle>
        <DialogBody>
          <RunIcon size={20} />
          <DialogText>{"Windows 将根据你所输入的名称，为你打开相应的程序、\n文件夹、文档或 Internet 资源。"}</DialogText>
        </DialogBody>
        <InputRow>
          <InputLabel>打开(O):</InputLabel>
          <RunInput>no<Cursor /><InputChevron><ChevronDown size={9} strokeWidth={1.4} /></InputChevron></RunInput>
        </InputRow>
        <Suggestions>notepad</Suggestions>
        <DialogFooter>
          <DlgButton $primary>确定</DlgButton>
          <DlgButton>取消</DlgButton>
          <DlgButton>浏览(B)...</DlgButton>
        </DialogFooter>
      </Dialog>

      <GreenBar $x={0} $y={0} $w={77} $h={3} />
      <GreenBar $x={0} $y={0} $w={3} $h={80} />
      <GreenBar $x={0} $y={640} $w={2} $h={55} />
      <GreenBar $x={1200} $y={0} $w={80} $h={3} />
      <GreenBar $x={1276} $y={0} $w={4} $h={66} />
      <GreenBar $x={1276} $y={640} $w={4} $h={55} />

      <MeetingBadge><BadgeApp>MindM</BadgeApp>腾讯会议</MeetingBadge>
      <SpeakToast>
        <Mic size={10} color="#3f7a5a" fill="#3f7a5a" />
        <span>正在讲话: 超有趣的游虫虫;</span>
      </SpeakToast>
      <MeetingMenu><List size={12} strokeWidth={2} /></MeetingMenu>
    </Screen>
  );
}
